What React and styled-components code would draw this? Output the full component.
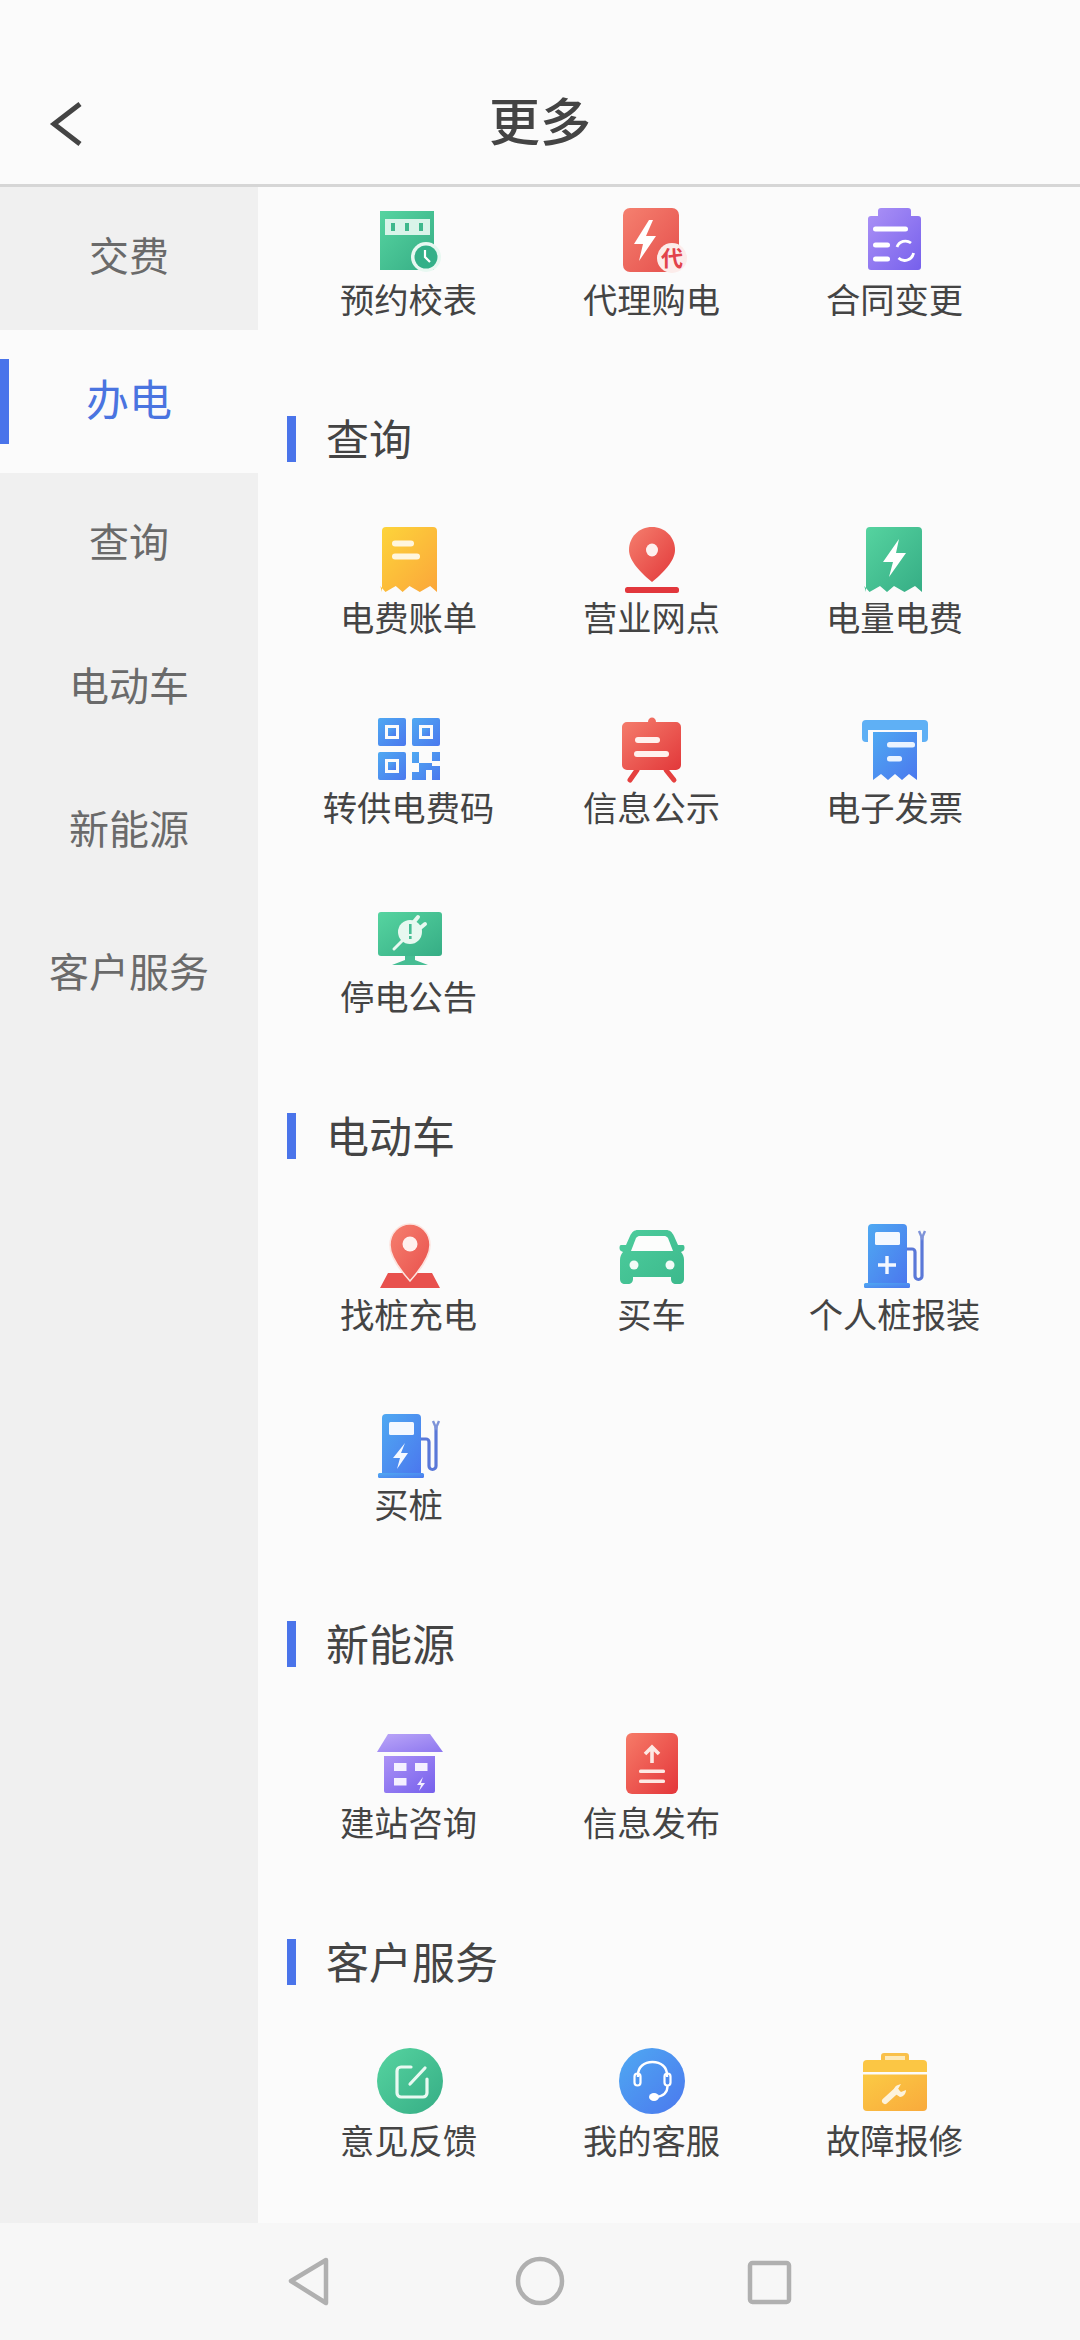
import React from "react";
import styled, { createGlobalStyle } from "styled-components";

const GlobalStyle = createGlobalStyle`
  html, body { margin: 0; padding: 0; background: #fbfbfb; }
  * { box-sizing: border-box; }
`;
const FONT = `"Noto Sans CJK SC", "Noto Sans", sans-serif`;

const Page = styled.div`
  width: 1080px; height: 2340px; display: flex; flex-direction: column; overflow: hidden;
  background: #fbfbfb; font-family: ${FONT}; color: #444;
`;
const Header = styled.header`
  height: 187px; flex: none; display: grid; grid-template-columns: 1fr auto 1fr; align-items: center;
  padding: 60px 0 6px; border-bottom: 3px solid #d6d6d6;
`;
const BackButton = styled.div`
  padding-left: 48px; margin-top: 10px; display: flex; align-items: center; height: 50px;
`;
const Title = styled.h1`
  margin: 0; font-size: 51px; line-height: 60px; font-weight: 500; color: #444;
`;
const Body = styled.div`
  flex: 1; min-height: 0; display: flex;
`;
const Sidebar = styled.nav`
  width: 258px; flex: none; background: #f0f0f0; display: flex; flex-direction: column;
`;
const SideItem = styled.div`
  height: 143.2px; flex: none; display: flex; align-items: center; justify-content: center;
  position: relative; line-height: 48px; padding-bottom: 9px;
  font-size: ${p => (p.$active ? "43px" : "40px")};
  color: ${p => (p.$active ? "#4a74e0" : "#6a6a6a")};
  background: ${p => (p.$active ? "#fbfbfb" : "transparent")};
`;
const ActiveMark = styled.i`
  position: absolute; left: 0; top: 29px; width: 9px; height: 85px; background: #4a74ea;
`;
const Content = styled.main`
  flex: 1; padding: 21px 0 0 29px; display: flex; flex-direction: column;
`;
const Section = styled.section`
  margin-bottom: 90px;
`;
const SectionTitle = styled.div`
  height: 46px; margin-bottom: 64px; display: flex; align-items: center; gap: 30px;
  font-size: 43px; color: #444;
`;
const SectionText = styled.span`
  line-height: 42px; height: 46px;
`;
const SectionBar = styled.i`
  width: 9px; height: 46px; background: #4a74ea; flex: none;
`;
const Grid = styled.div`
  display: grid; grid-template-columns: repeat(3, 243px); row-gap: 71.5px;
`;
const Item = styled.div`
  display: flex; flex-direction: column; align-items: center;
`;
const IconSvg = styled.svg`
  width: 80px; height: 66px; display: block; overflow: visible; flex: none;
`;
const Label = styled.div`
  font-size: 34.3px; line-height: 48px; height: 52px; white-space: nowrap; color: #444;
`;
const BottomNav = styled.footer`
  height: 117px; flex: none; background: #f7f7f7; display: flex; align-items: center; padding-bottom: 1px;
`;
const NavIcon = styled.svg`
  width: 1080px; height: 117px; display: block;
`;

const Grad = ({ id, a, b }) => (
  <defs>
    <linearGradient id={id} x1="0" y1="0" x2="1" y2="1">
      <stop offset="0" stopColor={a} />
      <stop offset="1" stopColor={b} />
    </linearGradient>
  </defs>
);
const GREEN = ["#56d4a0", "#36ad85"];
const RED = ["#f57f6e", "#e2383a"];
const BLUE = ["#4fa9f2", "#4b78ee"];
const PURPLE = ["#ac92f6", "#7660ec"];
const YELLOW = ["#fdd53a", "#fba63a"];
const ORANGE = ["#fbca44", "#f9aa3c"];
const W = "#fff";

const ticket = (l, r, t, b) => {
  const w = (r - l) / 8;
  return `M${l} ${t + 4}a4 4 0 0 1 4-4H${r - 4}a4 4 0 0 1 4 4V${b}l${-w} ${-6}l${-w * 1.5} ${6}l${-w * 1.5} ${-6}l${-w} ${6}l${-w} ${-6}l${-w * 1.5} ${6}l${-w * 0.75} ${-6}L${l} ${b}Z`;
};

const pump = (id, inner) => (
  <>
    <Grad id={id} a={BLUE[0]} b={BLUE[1]} />
    <path d="M13 5a4 4 0 0 1 4-4h31a4 4 0 0 1 4 4v55H13Z" fill={`url(#${id})`} />
    <rect x="9" y="60" width="46" height="5" rx="1.500" fill={`url(#${id})`} />
    <rect x="20" y="9" width="25" height="13" rx="1.500" fill="#f4f8ff" />
    <path d="M52 26h5a3 3 0 0 1 3 3v24a3.500 3.500 0 0 0 7 0V14" fill="none" stroke="#5a78d8" strokeWidth="3.200" />
    <path d="M64 8l3 7 3-7" fill="none" stroke="#7e93d8" strokeWidth="2.400" />
    {inner}
  </>
);

const icons = {
  schedule: (
    <>
      <Grad id="g1" a={GREEN[0]} b={GREEN[1]} />
      <rect x="11" y="3" width="54" height="59" fill="url(#g1)" />
      <rect x="16" y="11" width="45" height="16" fill="#d9f4e9" />
      <rect x="22" y="15" width="4" height="8" fill="#3fb88c" />
      <rect x="36" y="15" width="4" height="8" fill="#3fb88c" />
      <rect x="50" y="15" width="4" height="8" fill="#3fb88c" />
      <circle cx="57" cy="49" r="15" fill="#e8f8f1" />
      <circle cx="57" cy="49" r="11.500" fill="#34b088" />
      <path d="M56 42v7l5 5" fill="none" stroke={W} strokeWidth="2.200" />
    </>
  ),
  agent: (
    <>
      <Grad id="g2" a="#f5806f" b="#e54f4c" />
      <rect x="11" y="0" width="56" height="64" rx="7" fill="url(#g2)" />
      <path d="M37 12L22 36h9l-4 17 17-25h-10l7-16Z" fill={W} />
      <circle cx="60" cy="50" r="15" fill="#fcecea" />
      <text x="60" y="58" textAnchor="middle" fontSize="22" fontWeight="700" fill="#e2424a" fontFamily={FONT}>代</text>
    </>
  ),
  contract: (
    <>
      <Grad id="g3" a={PURPLE[0]} b={PURPLE[1]} />
      <path d="M23 3a3 3 0 0 1 3-3h27a3 3 0 0 1 3 3v5h7a3 3 0 0 1 3 3v48a3 3 0 0 1-3 3H16a3 3 0 0 1-3-3V11a3 3 0 0 1 3-3h7Z" fill="url(#g3)" />
      <rect x="18" y="18.500" width="35" height="5" rx="2.500" fill={W} />
      <rect x="18" y="34.500" width="17" height="5" rx="2.500" fill={W} />
      <rect x="18" y="48.500" width="17" height="5" rx="2.500" fill={W} />
      <path d="M42 39a9 9 0 0 1 14-4M58.500 45a9 9 0 0 1-15 5" fill="none" stroke={W} strokeWidth="2.800" />
    </>
  ),
  bill: (
    <>
      <Grad id="g4" a={YELLOW[0]} b={YELLOW[1]} />
      <path d={ticket(13, 68, 1, 66)} fill="url(#g4)" />
      <rect x="23" y="14.500" width="22" height="6" rx="3" fill="#fff6dd" />
      <rect x="23" y="27.500" width="28" height="6" rx="3" fill="#fff6dd" />
    </>
  ),
  location: (
    <>
      <Grad id="g5" a={RED[0]} b={RED[1]} />
      <path d="M40 1c13 0 23 10 23 23 0 11-12 23-23 32C29 47 17 35 17 24 17 11 27 1 40 1Z" fill="url(#g5)" />
      <ellipse cx="40" cy="24" rx="6" ry="6.500" fill="#fdf0ee" />
      <rect x="13" y="61" width="54" height="6" rx="2.500" fill="#e2373c" />
    </>
  ),
  energy: (
    <>
      <Grad id="g6" a={GREEN[0]} b={GREEN[1]} />
      <path d={ticket(11, 67, 1, 66)} fill="url(#g6)" />
      <path d="M44 13L28 36h10l-4 15 17-24H41l3-14Z" fill={W} />
    </>
  ),
  qr: (
    <>
      <Grad id="g7" a={BLUE[0]} b={BLUE[1]} />
      <g fill="url(#g7)">
        <path fillRule="evenodd" d="M11 2h24a2 2 0 0 1 2 2v24a2 2 0 0 1-2 2H11a2 2 0 0 1-2-2V4a2 2 0 0 1 2-2Zm5 7v14h14V9Z" />
        <path fillRule="evenodd" d="M45 2h24a2 2 0 0 1 2 2v24a2 2 0 0 1-2 2H45a2 2 0 0 1-2-2V4a2 2 0 0 1 2-2Zm5 7v14h14V9Z" />
        <path fillRule="evenodd" d="M11 36h24a2 2 0 0 1 2 2v24a2 2 0 0 1-2 2H11a2 2 0 0 1-2-2V38a2 2 0 0 1 2-2Zm5 7v14h14V43Z" />
        <path d="M43 36h7v11h-7ZM63 36h8v9h-8ZM50 47h7v17h-7ZM57 47h6v7h-6ZM43 56h7v8h-7ZM63 50h8v14h-8Z" />
      </g>
      <rect x="19" y="12" width="8" height="8" fill="url(#g7)" />
      <rect x="53" y="12" width="8" height="8" fill="url(#g7)" />
      <rect x="19" y="46" width="8" height="8" fill="url(#g7)" />
    </>
  ),
  notice: (
    <>
      <Grad id="g8" a={RED[0]} b={RED[1]} />
      <path d="M25 54L18 64M54 54l8 10" stroke="#e5403f" strokeWidth="5" strokeLinecap="round" fill="none" />
      <path d="M36 6c0-6 8-6 8 0h20a5 5 0 0 1 5 5v38a5 5 0 0 1-5 5H15a5 5 0 0 1-5-5V11a5 5 0 0 1 5-5Z" fill="url(#g8)" />
      <rect x="23" y="21" width="25" height="6" rx="3" fill="#fff1ee" />
      <rect x="22" y="35" width="35" height="6" rx="3" fill="#fff1ee" />
    </>
  ),
  invoice: (
    <>
      <Grad id="g9" a={BLUE[0]} b={BLUE[1]} />
      <path d="M11 4h58a4 4 0 0 1 4 4v14a4 4 0 0 1-4 4h-2V14H13v12h-2a4 4 0 0 1-4-4V8a4 4 0 0 1 4-4Z" fill="#5fb0f5" />
      <path d="M18 16h44v48l-8-6-7 6-7-6-7 6-7-6-8 6Z" fill="url(#g9)" />
      <rect x="32" y="26" width="28" height="5.500" rx="2.500" fill="#eaf3ff" />
      <rect x="32" y="40" width="15" height="5.500" rx="2.500" fill="#eaf3ff" />
    </>
  ),
  outage: (
    <>
      <Grad id="g10" a={GREEN[0]} b={GREEN[1]} />
      <rect x="9" y="7" width="64" height="44" rx="3" fill="url(#g10)" />
      <path d="M36 51h10v4l13 5H23l13-5Z" fill="#46bd93" />
      <circle cx="41" cy="27" r="12" fill="#e8f8f0" />
      <path d="M44 18l5-6M50 24l6-5" stroke="#e8f8f0" strokeWidth="4" strokeLinecap="round" />
      <path d="M33 36L25 44" stroke="#e8f8f0" strokeWidth="3" strokeLinecap="round" />
      <rect x="40" y="19" width="2.600" height="10" fill="#46bd93" />
      <rect x="40" y="31" width="2.600" height="3" fill="#46bd93" />
    </>
  ),
  charger: (
    <>
      <Grad id="g11" a="#f6806f" b="#e8504c" />
      <path d="M19 50h44l8 15H11Z" fill="#e8514d" />
      <path d="M41 1c11 0 20 9 20 21 0 13-12 27-20 36-8-9-20-23-20-36C21 10 30 1 41 1Z" fill="url(#g11)" stroke="#fde3de" strokeWidth="1.500" />
      <circle cx="41" cy="21" r="7.500" fill="#fff1ee" />
    </>
  ),
  car: (
    <>
      <Grad id="g12" a="#4dcd9d" b="#3cb98c" />
      <path d="M26 7h28c4 0 6 2 8 6l4 9h5c2 0 2 5 0 6l-2 1c2 2 3 5 3 8v19c0 3-2 5-5 5h-3c-3 0-5-2-5-5v-2H21v2c0 3-2 5-5 5h-3c-3 0-5-2-5-5V37c0-3 1-6 3-8l-2-1c-2-1-2-6 0-6h5l4-9c2-4 4-6 8-6Z" fill="url(#g12)" />
      <path d="M24 15c1-1 2-2 3-2h26c1 0 2 1 3 2l5 13H19Z" fill="#fcfdfc" />
      <circle cx="22" cy="42" r="4.500" fill="#f2fbf7" />
      <circle cx="58" cy="42" r="4.500" fill="#f2fbf7" />
    </>
  ),
  pumpAdd: pump("g13", <path d="M32 33v18M23 42h18" stroke="#f4f8ff" strokeWidth="3.400" />),
  pumpBolt: pump("g14", <path d="M36 30L24 45h7l-3 11 11-16h-7l4-10Z" fill="#f4f8ff" />),
  station: (
    <>
      <Grad id="g15" a={PURPLE[0]} b={PURPLE[1]} />
      <Grad id="g15r" a="#bba6f8" b="#8d77ef" />
      <path d="M19 3h42l13 18H8Z" fill="url(#g15r)" />
      <path d="M15 25h51v35a2 2 0 0 1-2 2H17a2 2 0 0 1-2-2Z" fill="url(#g15)" />
      <rect x="25" y="32" width="12.500" height="8" fill="#f4f0ff" />
      <rect x="46" y="32" width="12.500" height="8" fill="#f4f0ff" />
      <rect x="25" y="47" width="12.500" height="7.500" fill="#f4f0ff" />
      <path d="M54 46l-6 8h4l-2 6 6-8h-4l2-6Z" fill="#f4f0ff" />
    </>
  ),
  publish: (
    <>
      <Grad id="g16" a="#f67b68" b="#e4363a" />
      <rect x="14" y="2" width="52" height="61" rx="6" fill="url(#g16)" />
      <path d="M40 32V16M33 23l7-7 7 7" fill="none" stroke="#fde9e4" strokeWidth="3.600" />
      <rect x="27" y="38.500" width="26" height="3.600" rx="1.500" fill="#fde9e4" />
      <rect x="27" y="48.500" width="26" height="3.600" rx="1.500" fill="#fde9e4" />
    </>
  ),
  feedback: (
    <>
      <Grad id="g17" a={GREEN[0]} b={GREEN[1]} />
      <ellipse cx="41" cy="32" rx="33" ry="33" fill="url(#g17)" />
      <path d="M42 18H32a4 4 0 0 0-4 4v22a4 4 0 0 0 4 4h22a4 4 0 0 0 4-4V30" fill="none" stroke="#e9f9f2" strokeWidth="3.200" strokeLinecap="round" />
      <path d="M41 35l15-16" stroke="#e9f9f2" strokeWidth="3.200" strokeLinecap="round" />
    </>
  ),
  service: (
    <>
      <Grad id="g18" a={BLUE[0]} b={BLUE[1]} />
      <ellipse cx="40" cy="32" rx="33" ry="33" fill="url(#g18)" />
      <path d="M26 28v-2c0-8 6-13 14.500-13S55 18 55 26v2" fill="none" stroke={W} strokeWidth="2.400" />
      <rect x="22.500" y="24.500" width="6" height="12" rx="3" fill="none" stroke={W} strokeWidth="2.200" />
      <rect x="52.500" y="24.500" width="6" height="12" rx="3" fill="none" stroke={W} strokeWidth="2.200" />
      <path d="M55.500 37c0 6-4 10-11 11" fill="none" stroke={W} strokeWidth="2.400" />
      <ellipse cx="42" cy="48" rx="5" ry="4" fill={W} />
    </>
  ),
  repair: (
    <>
      <Grad id="g19" a={ORANGE[0]} b={ORANGE[1]} />
      <path d="M26 11V7a3 3 0 0 1 3-3h22a3 3 0 0 1 3 3v4h-5V9H31v2Z" fill="#f9c04a" />
      <rect x="30" y="7" width="20" height="4" fill="#fde9b8" />
      <path d="M12 11h56a4 4 0 0 1 4 4v8H8v-8a4 4 0 0 1 4-4Z" fill="#fbc644" />
      <path d="M8 25.500h64V58a4 4 0 0 1-4 4H12a4 4 0 0 1-4-4Z" fill="url(#g19)" />
      <path d="M30 52l11-10" stroke="#fdf3dc" strokeWidth="6" strokeLinecap="round" />
      <path d="M39 44c-1-4 1-7 4-8l3-1-3 5 3 3 5-2c0 4-3 7-6 7Z" fill="#fdf3dc" />
    </>
  ),
};

const Icon = ({ name }) => <IconSvg viewBox="0 0 80 66">{icons[name]}</IconSvg>;

const sections = [
  { items: [["预约校表", "schedule"], ["代理购电", "agent"], ["合同变更", "contract"]] },
  {
    title: "查询",
    items: [
      ["电费账单", "bill"], ["营业网点", "location"], ["电量电费", "energy"],
      ["转供电费码", "qr"], ["信息公示", "notice"], ["电子发票", "invoice"],
      ["停电公告", "outage"],
    ],
  },
  {
    title: "电动车",
    items: [["找桩充电", "charger"], ["买车", "car"], ["个人桩报装", "pumpAdd"], ["买桩", "pumpBolt"]],
  },
  { title: "新能源", items: [["建站咨询", "station"], ["信息发布", "publish"]] },
  { title: "客户服务", items: [["意见反馈", "feedback"], ["我的客服", "service"], ["故障报修", "repair"]] },
];
const sideItems = ["交费", "办电", "查询", "电动车", "新能源", "客户服务"];

export default function App() {
  return (
    <Page>
      <GlobalStyle />
      <Header>
        <BackButton>
          <svg width="36" height="46" viewBox="0 0 36 46">
            <path d="M32 3L6 23l26 20" fill="none" stroke="#444" strokeWidth="5" />
          </svg>
        </BackButton>
        <Title>更多</Title>
        <div />
      </Header>
      <Body>
        <Sidebar>
          {sideItems.map((s, i) => (
            <SideItem key={s} $active={i === 1}>
              {i === 1 && <ActiveMark />}
              {s}
            </SideItem>
          ))}
        </Sidebar>
        <Content>
          {sections.map((sec, i) => (
            <Section key={i}>
              {sec.title && (
                <SectionTitle>
                  <SectionBar />
                  <SectionText>{sec.title}</SectionText>
                </SectionTitle>
              )}
              <Grid>
                {sec.items.map(([label, icon]) => (
                  <Item key={label}>
                    <Icon name={icon} />
                    <Label>{label}</Label>
                  </Item>
                ))}
              </Grid>
            </Section>
          ))}
        </Content>
      </Body>
      <BottomNav>
        <NavIcon viewBox="0 0 1080 117">
          <path d="M326 37L291 58l35 22Z" fill="none" stroke="#b0b0b0" strokeWidth="4.500" strokeLinejoin="round" />
          <circle cx="540" cy="58" r="22" fill="none" stroke="#b0b0b0" strokeWidth="4.500" />
          <rect x="750" y="40" width="39" height="39" rx="2.500" fill="none" stroke="#b0b0b0" strokeWidth="4.500" />
        </NavIcon>
      </BottomNav>
    </Page>
  );
}
